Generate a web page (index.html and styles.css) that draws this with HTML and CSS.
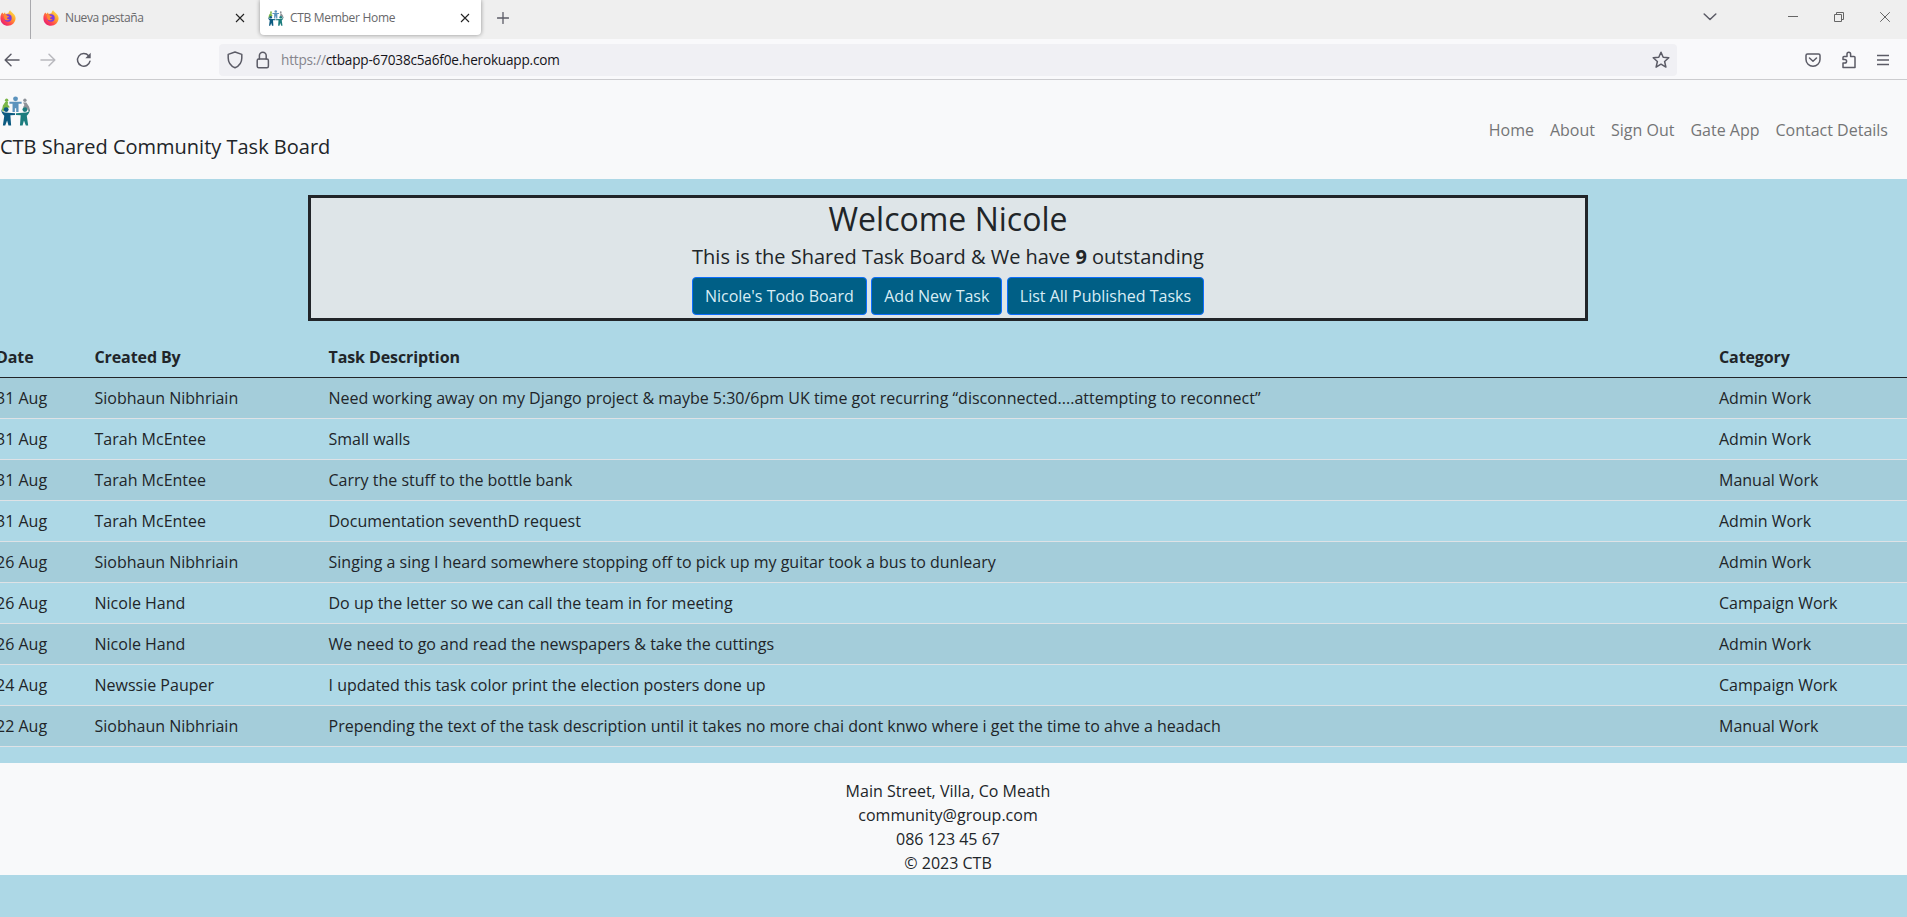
FILE: index.html
```html
<!DOCTYPE html>
<html lang="en">
<head>
<meta charset="utf-8">
<title>CTB Member Home</title>
<link rel="stylesheet" href="styles.css">
</head>
<body>
<svg class="defs" width="0" height="0" aria-hidden="true">
  <defs>
    <linearGradient id="flame" x1="0.9" y1="0.1" x2="0.2" y2="0.9">
      <stop offset="0" stop-color="#ffe14a"/><stop offset="0.4" stop-color="#ff9a2e"/><stop offset="0.75" stop-color="#ff4450"/><stop offset="1" stop-color="#e8246e"/>
    </linearGradient>
    <symbol id="fox" viewBox="0 0 16 16">
      <path fill="url(#flame)" d="M2.2 2.6 3.7 4 5 2.2l.5 1.7L8.500 3.200C8.600 2 9.300 1 10.200.3c.5 1.400 1.700 1.900 2.700 2.900C14.800 4.900 15.700 6.600 15.600 8.600 15.400 12.700 12 15.800 8 15.800S.4 12.600.4 8.400C.4 6.100 1 4 2.200 2.600Z"/>
      <circle cx="8" cy="8" r="3.700" fill="#7b3be0"/>
      <path fill="#ff8a34" d="M3.800 5.200c1.400-.8 2.500-.5 3.500.5l1.800.7c-.3.900-1.300 1-2 1.300C7 9 8.200 9.700 9.800 9.100c-.8 1.500-4.600 2-5.600-.7Z"/>
    </symbol>
    <symbol id="people" viewBox="0 0 32 32">
      <g fill="#7ab648"><circle cx="6" cy="4.500" r="1.800"/><path d="M4.500 6.500h3l-.3 2.500L9.500 12l-2 .5L4 13l-1.500 4L1 15l1-5Z"/></g>
      <g fill="#8d9298"><circle cx="25.500" cy="4.500" r="1.800"/><path d="M23.500 7h3.500l3 4.500 1 4-1.500 1L27.500 13l-3-.5-1-.5 1.500-2.500Z"/></g>
      <g fill="#5b93bd"><circle cx="15.500" cy="3" r="2.600"/><path d="M9 6.200h13v2h-3.300V17h-2.500v-4h-1.400v4h-2.500V8.200H9Z"/></g>
      <g fill="#0b5a80"><circle cx="5.500" cy="14.500" r="2.600"/><path d="M0 13c.5 3 1.500 4 4 4.500L15 18.500v1.800l-5 .3.800 10.900H8L6.500 26 4.500 31.500H2L3.500 21C1.300 19 0 16.500 0 13Z"/></g>
      <g fill="#1c7d7e"><circle cx="25.500" cy="14.500" r="2.600"/><path d="M31 13c-.5 3-1.500 4-4 4.500L16 18.500v1.800l5 .3-.8 10.900H23l1.500-5.500 2 5.500H29L27.500 21C29.700 19 31 16.500 31 13Z"/></g>
    </symbol>
    <symbol id="close" viewBox="0 0 10 10"><path d="M1 1l8 8M9 1l-8 8"/></symbol>
  </defs>
</svg>

<div class="browser">
  <div class="tabs">
    <div class="tab pinned"><svg class="fav"><use href="#fox"/></svg></div>
    <div class="tab idle"><svg class="fav"><use href="#fox"/></svg><span class="label">Nueva pestaña</span><svg class="x"><use href="#close"/></svg></div>
    <div class="tab active"><svg class="fav"><use href="#people"/></svg><span class="label">CTB Member Home</span><svg class="x"><use href="#close"/></svg></div>
    <svg class="line plus" width="12" height="12" viewBox="0 0 12 12"><path d="M6 .5v11M.5 6h11"/></svg>
    <div class="window">
      <svg class="line" width="14" height="8" viewBox="0 0 14 8"><path d="M1.200 1 7 6.500 12.800 1"/></svg>
      <svg class="line thin min" width="10" height="10" viewBox="0 0 10 10"><path d="M0 4.500h10"/></svg>
      <svg class="line thin" width="10" height="10" viewBox="0 0 10 10"><path d="M.5 2.500h7v7h-7zM2.500 2.500v-2h7v7h-2"/></svg>
      <svg class="line thin" width="10" height="10" viewBox="0 0 10 10"><path d="M.2.2l9.600 9.600M9.800.2.2 9.800"/></svg>
    </div>
  </div>
  <div class="toolbar">
    <svg class="line back" width="16" height="14" viewBox="0 0 16 14"><path d="M15 7H1.500M7 1.200 1.200 7 7 12.800"/></svg>
    <svg class="line forward" width="16" height="14" viewBox="0 0 16 14"><path d="M1 7h13.500M9 1.200 14.800 7 9 12.800"/></svg>
    <svg class="line reload" width="16" height="16" viewBox="0 0 16 16"><path d="M14 9.200A6.300 6.300 0 1 1 12.600 3.800"/><path class="solid" d="M14.700.8v5.400H9.300Z"/></svg>
    <div class="address">
      <svg class="line" width="16" height="18" viewBox="0 0 16 18"><path d="M8 1 14.800 3.400V7c0 4.600-2.600 8-6.800 9.800C3.800 15 1.200 11.600 1.200 7V3.400Z"/></svg>
      <svg class="line lock" width="14" height="18" viewBox="0 0 14 18"><rect x="1.200" y="8" width="11.200" height="8.800" rx="1.500"/><path d="M3.400 8V4.600a3.400 3.400 0 0 1 6.800 0V8"/></svg>
      <span class="url"><i>https://</i>ctbapp-67038c5a6f0e.herokuapp.com</span>
      <svg class="line" width="18" height="18" viewBox="0 0 18 18"><path d="M9 1.200 11.200 6.300l5.600.5-4.200 3.700 1.300 5.600L9 13.200l-4.900 2.900 1.300-5.600L1.200 6.800l5.600-.5Z"/></svg>
    </div>
    <div class="tools">
      <svg class="line" width="16" height="16" viewBox="0 0 16 16"><path d="M2.500 2h11A1.500 1.500 0 0 1 15 3.500V7.500a7 6.700 0 0 1-14 0v-4A1.500 1.500 0 0 1 2.500 2ZM4.500 6 8 9.300 11.500 6"/></svg>
      <svg class="line" width="16" height="18" viewBox="0 0 16 18"><path d="M2 16.500V12h1.800a1.600 1.600 0 0 0 0-3.600H2V6.500Q2 5.500 3 5.500H6V3a1.800 1.800 0 0 1 3.600 0V5.500H13Q14 5.500 14 6.500V16.500Z"/></svg>
      <svg class="line" width="12" height="12" viewBox="0 0 12 12"><path d="M0 1.500h12M0 6h12M0 10.500h12"/></svg>
    </div>
  </div>
</div>

<div class="page">
  <header class="site">
    <a class="brand"><svg class="logo"><use href="#people"/></svg><span>CTB Shared Community Task Board</span></a>
    <nav><a>Home</a><a>About</a><a>Sign Out</a><a>Gate App</a><a>Contact Details</a></nav>
  </header>

  <section class="welcome">
    <h1>Welcome Nicole</h1>
    <p>This is the Shared Task Board &amp; We have <b>9</b> outstanding</p>
    <div class="actions"><a class="btn">Nicole's Todo Board</a><a class="btn">Add New Task</a><a class="btn">List All Published Tasks</a></div>
  </section>

  <table class="tasks">
    <colgroup><col class="c-date"><col class="c-by"><col class="c-desc"><col></colgroup>
    <thead><tr><th>Date</th><th>Created By</th><th>Task Description</th><th>Category</th></tr></thead>
    <tbody>
      <tr><td>31 Aug</td><td>Siobhaun Nibhriain</td><td>Need working away on my Django project &amp; maybe 5:30/6pm UK time got recurring “disconnected....attempting to reconnect”</td><td>Admin Work</td></tr>
      <tr><td>31 Aug</td><td>Tarah McEntee</td><td>Small walls</td><td>Admin Work</td></tr>
      <tr><td>31 Aug</td><td>Tarah McEntee</td><td>Carry the stuff to the bottle bank</td><td>Manual Work</td></tr>
      <tr><td>31 Aug</td><td>Tarah McEntee</td><td>Documentation seventhD request</td><td>Admin Work</td></tr>
      <tr><td>26 Aug</td><td>Siobhaun Nibhriain</td><td>Singing a sing I heard somewhere stopping off to pick up my guitar took a bus to dunleary</td><td>Admin Work</td></tr>
      <tr><td>26 Aug</td><td>Nicole Hand</td><td>Do up the letter so we can call the team in for meeting</td><td>Campaign Work</td></tr>
      <tr><td>26 Aug</td><td>Nicole Hand</td><td>We need to go and read the newspapers &amp; take the cuttings</td><td>Admin Work</td></tr>
      <tr><td>24 Aug</td><td>Newssie Pauper</td><td>I updated this task color print the election posters done up</td><td>Campaign Work</td></tr>
      <tr><td>22 Aug</td><td>Siobhaun Nibhriain</td><td>Prepending the text of the task description until it takes no more chai dont knwo where i get the time to ahve a headach</td><td>Manual Work</td></tr>
    </tbody>
  </table>

  <footer>
    <div>Main Street, Villa, Co Meath</div>
    <div>community@group.com</div>
    <div>086 123 45 67</div>
    <div>© 2023 CTB</div>
  </footer>
</div>
</body>
</html>
```
FILE: styles.css
```css
* { box-sizing: border-box; }
body {
  margin: 0;
  height: 917px;
  overflow: hidden;
  background: #add8e6;
  color: #212529;
  font: 16px/24px "Open Sans", "Noto Sans", sans-serif;
}
svg { display: block; flex: none; }
.defs { position: absolute; }
.line { fill: none; stroke: #5b5b66; stroke-width: 1.5; stroke-linecap: round; stroke-linejoin: round; }
.thin { stroke: #666; stroke-width: 1; stroke-linecap: butt; }
.line .solid { fill: #5b5b66; stroke: none; }

/* Browser window */
.browser { height: 80px; border-bottom: 1px solid #cccccf; background: #f9f9fb; }
.tabs { display: flex; height: 39px; background: #efefef; }
.tab { display: flex; align-items: center; height: 35px; }
.fav { width: 16px; height: 16px; }
.pinned { width: 31px; height: 39px; padding-bottom: 4px; border-right: 1px solid #a9a9ad; }
.idle { width: 229px; padding-left: 12px; }
.active { width: 221px; padding-left: 8px; background: #fff; border-radius: 0 0 4px 4px; box-shadow: 0 0 4px rgba(0,0,0,.4); }
.label { flex: 1; margin-left: 6px; color: #68686b; font-size: 12px; letter-spacing: -.4px; white-space: nowrap; }
.active .label { letter-spacing: -.3px; }
.x { width: 10px; height: 10px; stroke: #222; stroke-width: 1.100; }
.idle .x { margin-right: 15px; }
.active .x { margin-right: 11px; }
.plus { margin: 12px 0 0 16px; stroke-width: 1.300; }
.window { display: flex; align-items: center; gap: 36px; height: 34px; margin-left: auto; padding-right: 17px; }
.min { margin-left: 35px; }
.toolbar { display: flex; align-items: center; height: 40px; padding-top: 1px; }
.back { margin-left: 4px; }
.forward { margin-left: 20px; opacity: .4; }
.reload { margin-left: 20px; }
.address { display: flex; align-items: center; width: 1458px; height: 32px; margin-left: 127px; padding: 0 7px 0 8px; background: #f0f0f4; border-radius: 4px; }
.lock { margin-left: 13px; }
.url { flex: 1; margin-left: 11px; color: #15141a; font-size: 13.600px; letter-spacing: -.2px; }
.url i { color: #85858c; font-style: normal; }
.tools { display: flex; align-items: center; gap: 20px; margin-left: auto; padding-right: 18px; }

/* Site content, starting slightly left of the viewport */
.page { margin-left: -11px; }
.site { display: flex; align-items: center; justify-content: space-between; height: 99px; padding: 0 19px 0 11px; background: #f8f9fa; }
.brand { display: flex; flex-direction: column; gap: 6px; padding-bottom: 3px; font-size: 20px; line-height: 30px; }
.logo { width: 30px; height: 30px; margin: 1px 0 0 1px; }
nav { display: flex; gap: 16px; color: #747576; }
.welcome { width: 1280px; height: 126px; margin: 16px auto; border: 3px solid #212529; background: #dee5e8; text-align: center; }
.welcome h1 { margin: 0; padding-top: 2px; font-size: 32px; font-weight: 400; line-height: 38.400px; }
.welcome p { margin: 4px 0 5px; font-size: 20px; line-height: 30px; }
.actions { display: flex; justify-content: center; gap: 4.400px; }
.btn { height: 38px; padding: 6px 12px; border: 1px solid #0d6efd; border-radius: 4px; background: #005f86; color: #d8edf5; }
.tasks { width: 100%; border-collapse: separate; border-spacing: 0; table-layout: fixed; }
.c-date { width: 97.500px; }
.c-by { width: 234px; }
.c-desc { width: 1390.500px; }
.tasks th, .tasks td { height: 41px; padding: 8px; border-bottom: 1px solid #dee2e6; text-align: left; white-space: nowrap; }
.tasks th { border-color: #212529; font-weight: 700; letter-spacing: -.1px; }
.tasks tbody tr:nth-child(odd) { background: #a4cdda; }
.tasks th:first-child, .tasks td:first-child { padding-left: 7px; }
footer { height: 112px; margin-top: 16px; padding-top: 16px; background: #f8f9fa; text-align: center; }
```
